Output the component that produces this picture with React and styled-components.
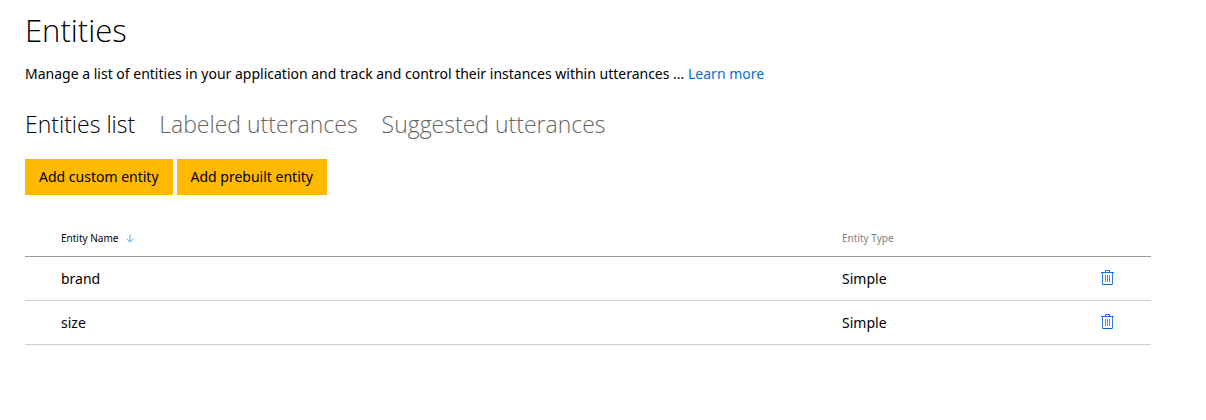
import styled, { createGlobalStyle } from "styled-components";

const GlobalStyle = createGlobalStyle`
  body {
    margin: 0;
    background: #fff;
    color: #000;
    font-family: "Noto Sans", "Open Sans", sans-serif;
    font-size: 14px;
    line-height: 20px;
  }
`;

const PageStyled = styled.main`
  padding: 8px 55px 24px 25px;
`;

const TitleStyled = styled.h1`
  margin: 0;
  font-family: "Open Sans", sans-serif;
  font-size: 31px;
  font-weight: 300;
  line-height: 44px;
`;

const DescriptionStyled = styled.p`
  margin: 12px 0 0;
`;

const LinkStyled = styled.a`
  color: #0a6cda;
  text-decoration: none;
`;

const TabsStyled = styled.div`
  display: flex;
  gap: 24px;
  margin-top: 24px;
`;

const TabStyled = styled.button`
  padding: 0;
  border: 0;
  background: none;
  color: ${(props) => (props.$active ? "#000" : "#666")};
  font-family: "Open Sans", sans-serif;
  font-size: 23px;
  font-weight: 300;
  line-height: 32px;
  cursor: pointer;
`;

const ActionsStyled = styled.div`
  display: flex;
  gap: 4px;
  margin-top: 19px;
`;

const ActionButtonStyled = styled.button`
  height: 36px;
  padding: 0 14px;
  border: 0;
  background: #ffb900;
  color: #000;
  font-family: inherit;
  font-size: 14px;
  line-height: 20px;
  cursor: pointer;
`;

const TableStyled = styled.table`
  width: 100%;
  margin-top: 26px;
  border-collapse: collapse;
  table-layout: fixed;
`;

const HeadCellStyled = styled.th`
  width: ${(props) => props.$width};
  height: 33px;
  padding: 0 0 2px ${(props) => (props.$indent ? "36px" : "0")};
  border-bottom: 1px solid #999;
  color: ${(props) => (props.$sorted ? "#000" : "#808080")};
  font-size: 10px;
  font-weight: 400;
  line-height: 16px;
  text-align: left;
`;

const CellStyled = styled.td`
  height: 43px;
  padding: 0 0 0 ${(props) => (props.$indent ? "36px" : "0")};
  border-bottom: 1px solid #ccc;
`;

const SortIconStyled = styled.svg`
  margin-left: 8px;
  vertical-align: middle;
`;

const DeleteButtonStyled = styled.button`
  display: block;
  padding: 0;
  border: 0;
  background: none;
  cursor: pointer;
`;

const DeleteIconStyled = styled.svg`
  display: block;
`;

const tabs = ["Entities list", "Labeled utterances", "Suggested utterances"];

const entities = [
  { name: "brand", type: "Simple" },
  { name: "size", type: "Simple" },
];

const SortIcon = () => (
  <SortIconStyled width="8" height="9" viewBox="0 0 8 9" fill="none" aria-hidden="true">
    <path d="M4 0.5V8M0.7 4.8L4 8.1L7.3 4.8" stroke="#62a8e2" />
  </SortIconStyled>
);

const DeleteIcon = () => (
  <DeleteIconStyled width="13" height="18" viewBox="0 0 13 18" fill="none" aria-hidden="true">
    <path d="M0 2.5H13M4.5 2V0.5H8.5V2" stroke="#1471dc" />
    <path d="M1.5 3V14.5H11.5V3" stroke="#2c80e4" />
    <path d="M2 14.5H11" stroke="#006ad8" />
    <path d="M4.5 5V12M6.5 5V12M8.5 5V12" stroke="#5585d6" />
  </DeleteIconStyled>
);

const EntityRow = (props) => {
  return (
    <tr>
      <CellStyled $indent>{props.name}</CellStyled>
      <CellStyled>{props.type}</CellStyled>
      <CellStyled>
        <DeleteButtonStyled type="button" aria-label={`Delete ${props.name}`}>
          <DeleteIcon />
        </DeleteButtonStyled>
      </CellStyled>
    </tr>
  );
};

const App = () => {
  return (
    <PageStyled>
      <GlobalStyle />
      <TitleStyled>Entities</TitleStyled>
      <DescriptionStyled>
        Manage a list of entities in your application and track and control
        their instances within utterances ...{" "}
        <LinkStyled href="#learn-more">Learn more</LinkStyled>
      </DescriptionStyled>
      <TabsStyled role="tablist">
        {tabs.map((tab, index) => (
          <TabStyled
            key={tab}
            type="button"
            role="tab"
            aria-selected={index === 0}
            $active={index === 0}
          >
            {tab}
          </TabStyled>
        ))}
      </TabsStyled>
      <ActionsStyled>
        <ActionButtonStyled type="button">Add custom entity</ActionButtonStyled>
        <ActionButtonStyled type="button">Add prebuilt entity</ActionButtonStyled>
      </ActionsStyled>
      <TableStyled>
        <thead>
          <tr>
            <HeadCellStyled $indent $sorted aria-sort="descending">
              Entity Name
              <SortIcon />
            </HeadCellStyled>
            <HeadCellStyled $width="23%">Entity Type</HeadCellStyled>
            <HeadCellStyled $width="50px" aria-label="Actions" />
          </tr>
        </thead>
        <tbody>
          {entities.map((entity) => (
            <EntityRow key={entity.name} name={entity.name} type={entity.type} />
          ))}
        </tbody>
      </TableStyled>
    </PageStyled>
  );
};

export default App;
